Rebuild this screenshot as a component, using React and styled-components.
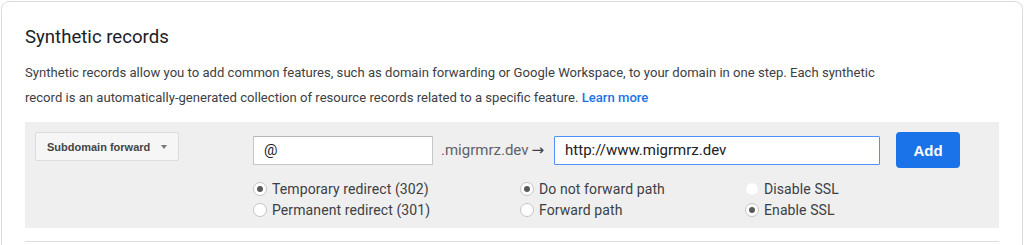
import React from "react";
import styled, { createGlobalStyle } from "styled-components";

const GlobalStyle = createGlobalStyle`
  body {
    margin: 0;
    background: #ffffff;
    font-family: Roboto, "Liberation Sans", Arial, sans-serif;
  }
`;

const Card = styled.section`
  margin: 1px 1px 0 1px;
  border: 1px solid #dadce0;
  border-radius: 8px;
  padding: 21px 23px 40px 23px;
  background: #ffffff;
`;

const Title = styled.h2`
  margin: 0;
  font-size: 18.6px;
  line-height: 28px;
  font-weight: 400;
  color: #202124;
`;

const Intro = styled.p`
  margin: 9px 0 0 0;
  max-width: 880px;
  font-size: 13.1px;
  line-height: 25px;
  color: #3c4043;
`;

const Link = styled.a`
  color: #1a73e8;
  font-weight: 500;
  text-decoration: none;
`;

const Panel = styled.div`
  margin-top: 12px;
  background: #efefef;
  padding: 10px 10px 8px 10px;
  display: flex;
  align-items: flex-start;
`;

const Dropdown = styled.button`
  width: 144px;
  height: 29px;
  margin-right: 74px;
  padding: 0 0 0 11px;
  display: flex;
  align-items: center;
  gap: 11px;
  background: #f6f6f6;
  border: 1px solid #dcdcdc;
  border-radius: 2px;
  font-family: "Liberation Sans", Arial, sans-serif;
  font-size: 11px;
  font-weight: 700;
  color: #444444;
  cursor: pointer;
`;

const Caret = styled.span`
  width: 0;
  height: 0;
  border-left: 3.5px solid transparent;
  border-right: 3.5px solid transparent;
  border-top: 4px solid #777777;
`;

const Form = styled.div`
  display: flex;
  flex-direction: column;
`;

const InputRow = styled.div`
  display: flex;
  align-items: center;
`;

const TextInput = styled.input`
  box-sizing: border-box;
  width: ${(p) => p.$width}px;
  height: 29px;
  padding: 0 10px;
  border: 1px solid ${(p) => (p.$focused ? "#4d90fe" : "#c6c6c6")};
  border-top-color: ${(p) => (p.$focused ? "#4d90fe" : "#b4b4b4")};
  border-radius: 1px;
  background: #ffffff;
  font-family: Roboto, "Liberation Sans", Arial, sans-serif;
  font-size: 15px;
  color: #202124;
  outline: none;
`;

const Domain = styled.span`
  padding: 0 10px 0 8px;
  font-size: 15px;
  color: #5f6368;
  white-space: nowrap;
`;

const Arrow = styled.span`
  font-family: "DejaVu Sans", sans-serif;
  font-size: 15px;
  color: #3c4043;
  margin-left: 3px;
`;

const AddButton = styled.button`
  margin-left: 16px;
  width: 64px;
  height: 36px;
  border: none;
  border-radius: 4px;
  background: #1a73e8;
  color: #ffffff;
  font-family: "Liberation Sans", Arial, sans-serif;
  font-size: 15px;
  font-weight: 700;
  cursor: pointer;
`;

const Options = styled.div`
  margin-top: 10px;
  display: grid;
  grid-template-columns: 267px 225px auto;
`;

const Group = styled.div`
  display: flex;
  flex-direction: column;
`;

const Option = styled.label`
  display: flex;
  align-items: center;
  gap: 5px;
  height: 21px;
  font-size: 14px;
  letter-spacing: 0.1px;
  color: #3c4043;
  cursor: pointer;
`;

const Dot = styled.span`
  box-sizing: border-box;
  width: 14px;
  height: 14px;
  border-radius: 50%;
  background: #ffffff;
  border: 1px solid ${(p) => (p.$muted ? "#ececec" : "#c4c4c4")};
  display: flex;
  align-items: center;
  justify-content: center;
  flex-shrink: 0;

  &::after {
    content: "";
    width: 6px;
    height: 6px;
    border-radius: 50%;
    background: ${(p) => (p.$checked ? "#5a5a5a" : "transparent")};
  }
`;

const Divider = styled.div`
  margin-top: 13px;
  border-top: 1px solid #e0e0e0;
`;

const groups = [
  [
    { label: "Temporary redirect (302)", checked: true },
    { label: "Permanent redirect (301)" },
  ],
  [
    { label: "Do not forward path", checked: true },
    { label: "Forward path" },
  ],
  [
    { label: "Disable SSL", muted: true },
    { label: "Enable SSL", checked: true },
  ],
];

export default function App() {
  return (
    <>
      <GlobalStyle />
      <Card>
        <Title>Synthetic records</Title>
        <Intro>
          Synthetic records allow you to add common features, such as domain
          forwarding or Google Workspace, to your domain in one step. Each
          synthetic record is an automatically-generated collection of resource
          records related to a specific feature. <Link href="#">Learn more</Link>
        </Intro>
        <Panel>
          <Dropdown>
            Subdomain forward
            <Caret />
          </Dropdown>
          <Form>
            <InputRow>
              <TextInput $width={180} defaultValue="@" />
              <Domain>
                .migrmrz.dev<Arrow>→</Arrow>
              </Domain>
              <TextInput $width={326} $focused defaultValue="http://www.migrmrz.dev" />
              <AddButton>Add</AddButton>
            </InputRow>
            <Options>
              {groups.map((g, i) => (
                <Group key={i}>
                  {g.map((o) => (
                    <Option key={o.label}>
                      <Dot $checked={o.checked} $muted={o.muted} />
                      {o.label}
                    </Option>
                  ))}
                </Group>
              ))}
            </Options>
          </Form>
        </Panel>
        <Divider />
      </Card>
    </>
  );
}
